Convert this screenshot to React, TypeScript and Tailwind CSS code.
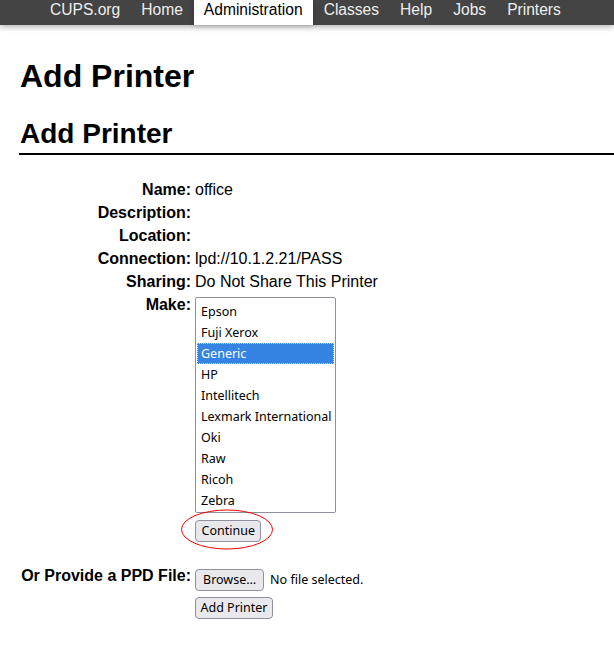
import React from "react";

const navItems = ["CUPS.org", "Home", "Administration", "Classes", "Help", "Jobs", "Printers"];

const makes = [
  "Epson",
  "Fuji Xerox",
  "Generic",
  "HP",
  "Intellitech",
  "Lexmark International",
  "Oki",
  "Raw",
  "Ricoh",
  "Zebra",
];

const ui = "font-['Noto_Sans',sans-serif] text-[12.5px]";
const btn = `${ui} h-[22px] bg-[#e9e9ed] border border-[#8f8f9d] rounded-[4px] text-black leading-none`;

const Label = ({ children }: { children: React.ReactNode }) => (
  <div className="text-right font-bold">{children}</div>
);

export default function App() {
  return (
    <div className="min-h-[657px] bg-white text-black font-['Liberation_Sans',Arial,sans-serif] text-[16px] leading-[23px]">
      {/* top nav */}
      <nav className="h-[25px] bg-[#444] shadow-[0_2px_6px_rgba(0,0,0,0.3)] relative z-10">
        <ul className="flex gap-[1px] pl-[40px] text-[15.6px] leading-[19px]">
          {navItems.map((item) => (
            <li
              key={item}
              className={
                item === "Administration"
                  ? "h-[25px] px-[10px] bg-white text-black shadow-[0_0_6px_rgba(0,0,0,0.25)]"
                  : "h-[25px] px-[10px] text-[#eee]"
              }
            >
              {item}
            </li>
          ))}
        </ul>
      </nav>

      <main className="px-[19px]">
        <h1 className="mt-[35px] text-[32px] leading-[32px] font-bold pl-[1px]">Add Printer</h1>
        <h2 className="mt-[28px] text-[28px] leading-[28px] font-bold pl-[1px] pb-[5px] border-b-2 border-black -mr-[19px]">
          Add Printer
        </h2>

        <div className="mt-[23px] -ml-[19px] grid grid-cols-[191px_1fr] gap-x-[4px]">
          <Label>Name:</Label>
          <div>office</div>
          <Label>Description:</Label>
          <div></div>
          <Label>Location:</Label>
          <div></div>
          <Label>Connection:</Label>
          <div>lpd://10.1.2.21/PASS</div>
          <Label>Sharing:</Label>
          <div>Do Not Share This Printer</div>

          <Label>Make:</Label>
          <div className="pt-[4px]">
            <div className={`${ui} w-[141px] border border-[#8f8f9d] rounded-[2px] px-[1px] pt-[3px] pb-[1px]`}>
              {makes.map((m) => (
                <div
                  key={m}
                  className={
                    m === "Generic"
                      ? "h-[21px] leading-[21px] pl-[4px] bg-[#3584e4] text-white outline-1 outline-dotted outline-[#cfe0f7] -outline-offset-1"
                      : "h-[21px] leading-[21px] pl-[4px] whitespace-nowrap"
                  }
                >
                  {m}
                </div>
              ))}
            </div>
            <div className="relative mt-[5px] w-fit">
              <button className={`${btn} px-[5.5px]`}>Continue</button>
              <svg
                className="absolute left-[-14px] top-[-9px] pointer-events-none"
                width="93"
                height="41"
                viewBox="0 0 93 41"
              >
                <ellipse cx="46" cy="20.5" rx="45.5" ry="19.5" fill="none" stroke="#e00" strokeWidth="1" />
              </svg>
            </div>
          </div>

          <div className="mt-[22px] pl-[1px] text-right font-bold whitespace-nowrap">Or Provide a PPD File:</div>
          <div className="mt-[21px]">
            <div className="flex items-center gap-[6px] pt-[5px]">
              <button className={`${btn} px-[7px]`}>Browse…</button>
              <span className={ui}>No file selected.</span>
            </div>
            <button className={`${btn} px-[4.5px] mt-[6px] block`}>Add Printer</button>
          </div>
        </div>
      </main>
    </div>
  );
}
